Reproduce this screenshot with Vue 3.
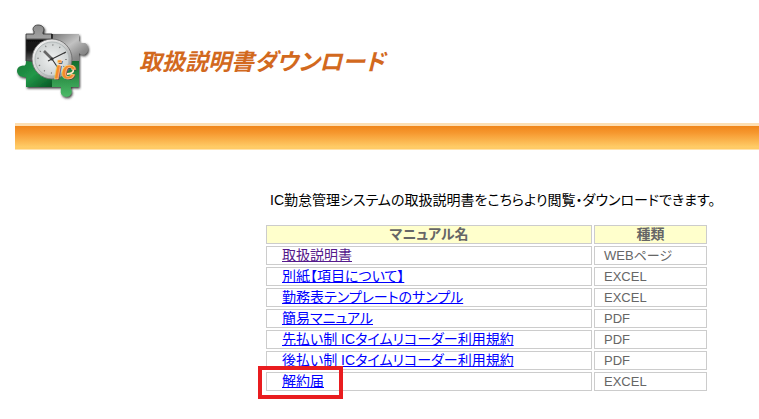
<script setup>
const manuals = [
  { name: '取扱説明書', type: 'WEBページ', visited: true },
  { name: '別紙【項目について】', type: 'EXCEL' },
  { name: '勤務表テンプレートのサンプル', type: 'EXCEL' },
  { name: '簡易マニュアル', type: 'PDF' },
  { name: '先払い制 ICタイムリコーダー利用規約', type: 'PDF' },
  { name: '後払い制 ICタイムリコーダー利用規約', type: 'PDF' },
  { name: '解約届', type: 'EXCEL', marked: true }
]
</script>

<template>
  <div class="page">
    <header class="header">
      <svg class="logo" viewBox="0 0 76 78" width="76" height="78" role="img" aria-label="ic">
        <defs>
          <linearGradient id="dark" x1="0" y1="0" x2="0" y2="1">
            <stop offset="0" stop-color="#8c8c8c" />
            <stop offset="0.36" stop-color="#a0a0a0" />
            <stop offset="0.42" stop-color="#111" />
            <stop offset="0.7" stop-color="#151515" />
            <stop offset="1" stop-color="#5c5c5c" />
          </linearGradient>
          <linearGradient id="gray" x1="0" y1="0" x2="1" y2="1">
            <stop offset="0" stop-color="#777" />
            <stop offset="0.45" stop-color="#c2c2c2" />
            <stop offset="0.75" stop-color="#8d8d8d" />
            <stop offset="1" stop-color="#777" />
          </linearGradient>
          <linearGradient id="green" x1="0" y1="0" x2="1" y2="1">
            <stop offset="0" stop-color="#1b7a38" />
            <stop offset="0.5" stop-color="#219748" />
            <stop offset="1" stop-color="#075624" />
          </linearGradient>
          <linearGradient id="lime" x1="0" y1="0" x2="0" y2="1">
            <stop offset="0" stop-color="#126c2c" />
            <stop offset="1" stop-color="#4cba68" />
          </linearGradient>
          <linearGradient id="rim" x1="0" y1="0" x2="1" y2="1">
            <stop offset="0" stop-color="#fff" />
            <stop offset="0.5" stop-color="#ccc" />
            <stop offset="1" stop-color="#888" />
          </linearGradient>
          <radialGradient id="face">
            <stop offset="0" stop-color="#f0f1f1" />
            <stop offset="1" stop-color="#ced2d2" />
          </radialGradient>
          <filter id="shade" x="-10%" y="-10%" width="130%" height="130%">
            <feDropShadow dx="1" dy="1.5" stdDeviation="0.8" flood-color="#222" flood-opacity="0.9" />
          </filter>
        </defs>
        <g filter="url(#shade)">
          <path d="M11 11h8V8c-2-1-1-6 4-6 6 0 7 5 5 7v2h9v27H11z" fill="url(#dark)" stroke="#333" stroke-width="0.8" />
          <path d="M37 11h27v7c1 2 3 2 6 2 3 1 3 5 3 7-1 5-6 6-9 3v8H37z" fill="url(#gray)" />
          <path d="M11 38c8 1 16 4 26 0v26H11V54c-3 0-6 0-8-3-2-3-1-7 3-8 3-1 5 1 5-5z" fill="url(#green)" />
          <path d="M37 38h27v26h-8c-1 2 2 4 0 7-2 4-7 3-9 1s-1-5-1-8h-9z" fill="url(#lime)" />
        </g>
        <path d="M37 11v27" stroke="#111" stroke-width="1.5" />
        <circle cx="37" cy="36" r="20" fill="url(#rim)" stroke="#666" stroke-width="0.8" />
        <circle cx="37" cy="36" r="17" fill="url(#face)" stroke="#b2b9b9" />
        <circle cx="37" cy="36" r="14" fill="none" stroke="#777" stroke-width="1.5" stroke-dasharray="1 6.33" />
        <path d="M37 36 29 28" stroke="#666" stroke-width="2.6" />
        <path d="M33 38 51 29M37 36l6 9" stroke="#333" stroke-width="1.1" />
        <circle cx="37" cy="36" r="1.5" fill="#333" />
        <text class="logo-text shadow" x="40" y="57">ic</text>
        <text class="logo-text" x="39" y="56">ic</text>
        <path d="M52 51c4 0 7-2 6-4" fill="none" stroke="#ffe8c8" stroke-width="1.8" />
      </svg>
      <h1>取扱説明書ダウンロード</h1>
    </header>
    <div class="bar"></div>

    <main class="content">
      <p class="lead">IC勤怠管理システムの取扱説明書をこちらより閲覧・ダウンロードできます。</p>
      <table class="manuals">
        <thead>
          <tr>
            <th class="name">マニュアル名</th>
            <th class="type">種類</th>
          </tr>
        </thead>
        <tbody>
          <tr v-for="manual in manuals" :key="manual.name">
            <td class="name" :class="{ marked: manual.marked }">
              <a href="#" :class="{ visited: manual.visited }">{{ manual.name }}</a>
            </td>
            <td class="type">{{ manual.type }}</td>
          </tr>
        </tbody>
      </table>
    </main>
  </div>
</template>

<style>
body {
  margin: 0;
  background: #fff;
}
</style>

<style scoped>
.page {
  padding: 0 0 20px 15px;
  font-family: "Liberation Sans", "Noto Sans CJK JP", sans-serif;
  font-size: 14px;
  font-feature-settings: "palt";
  color: #000;
}

.header {
  display: flex;
  align-items: center;
  gap: 48px;
  height: 123px;
}
.logo {
  flex: none;
}
.logo-text {
  font: italic bold 26px "Liberation Sans", sans-serif;
  fill: #f58b2c;
  stroke: #ffe0b0;
  stroke-width: 0.5px;
}
.logo-text.shadow {
  fill: #444;
  stroke: none;
}
h1 {
  margin: 0;
  font-size: 23px;
  line-height: 32px;
  font-weight: bold;
  font-style: italic;
  color: #d2691e;
}

.bar {
  height: 23px;
  border-top: 3px solid #fddfb3;
  border-bottom: 1px solid #ffe3ae;
  background: linear-gradient(#f08519, #f6982f 30%, #ffcb66 90%);
}

.content {
  max-width: 445px;
  padding: 40px 16px 0 249px;
}
.lead {
  margin: 0 0 12px;
  padding-left: 6px;
  line-height: 21px;
  white-space: nowrap;
}

.manuals {
  width: 100%;
  table-layout: fixed;
  border-collapse: separate;
  border-spacing: 2px;
  color: #666;
}
.manuals th,
.manuals td {
  height: 17px;
  padding: 0;
  border: 1px solid #ccc;
  line-height: 17px;
  white-space: nowrap;
}
.manuals th {
  background: #ffc;
  font-weight: bold;
}
.manuals td {
  padding-left: 15px;
}
.manuals .type {
  width: 111px;
}
.manuals td.type {
  width: 102px;
  padding-left: 9px;
  font-size: 13px;
}
a {
  color: #00f;
  text-decoration: underline;
}
a.visited {
  color: #551a8b;
}

/* 解約届の強調枠 */
.marked {
  position: relative;
}
.marked::after {
  content: "";
  position: absolute;
  top: -7px;
  left: -9px;
  width: 77px;
  height: 25px;
  border: 4px solid #e91c1f;
  pointer-events: none;
}
</style>
